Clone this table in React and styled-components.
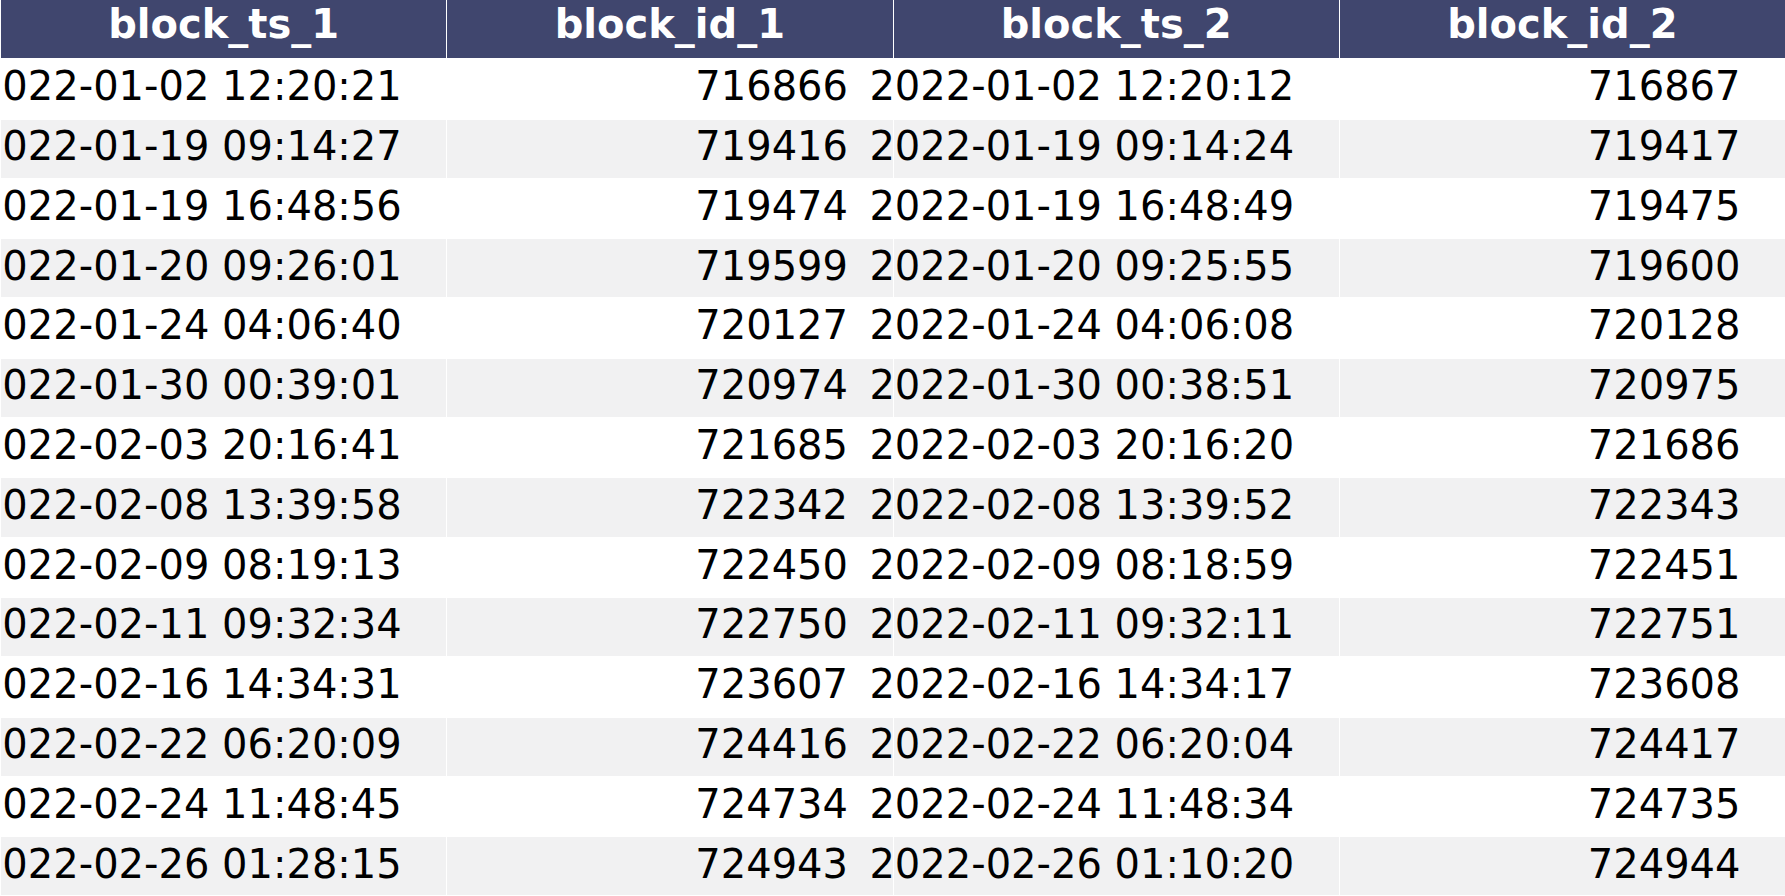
import React from "react";
import styled, { createGlobalStyle } from "styled-components";

const Global = createGlobalStyle`
  html, body {
    margin: 0;
    padding: 0;
    background: #ffffff;
    overflow: hidden;
  }
  body {
    font-family: "DejaVu Sans", "Liberation Sans", sans-serif;
  }
`;

const Table = styled.div`
  width: 1785px;
  height: 896px;
  box-sizing: border-box;
  padding-left: 1px;
  background: #ffffff;
  display: grid;
  grid-template-columns: repeat(4, 1fr);
  grid-template-rows: 58.3px repeat(14, 58.3px);
  column-gap: 1px;
  row-gap: 1.5px;
  overflow: hidden;
`;

const HeaderCell = styled.div`
  background: #40466e;
  color: #ffffff;
  font-weight: bold;
  font-size: 40px;
  line-height: 40px;
  display: flex;
  align-items: center;
  justify-content: center;
  padding-bottom: 10px;
  box-sizing: border-box;
  white-space: nowrap;
`;

const Cell = styled.div`
  background: ${(p) => (p.$striped ? "#f1f1f2" : "#ffffff")};
  color: #000000;
  font-size: 40px;
  line-height: 40px;
  display: flex;
  align-items: center;
  justify-content: flex-end;
  padding-right: 44.5px;
  padding-bottom: 5.6px;
  box-sizing: border-box;
  white-space: nowrap;
  min-width: 0;
  overflow: visible;
`;

const columns = ["block_ts_1", "block_id_1", "block_ts_2", "block_id_2"];

const rows = [
  ["2022-01-02 12:20:21", "716866", "2022-01-02 12:20:12", "716867"],
  ["2022-01-19 09:14:27", "719416", "2022-01-19 09:14:24", "719417"],
  ["2022-01-19 16:48:56", "719474", "2022-01-19 16:48:49", "719475"],
  ["2022-01-20 09:26:01", "719599", "2022-01-20 09:25:55", "719600"],
  ["2022-01-24 04:06:40", "720127", "2022-01-24 04:06:08", "720128"],
  ["2022-01-30 00:39:01", "720974", "2022-01-30 00:38:51", "720975"],
  ["2022-02-03 20:16:41", "721685", "2022-02-03 20:16:20", "721686"],
  ["2022-02-08 13:39:58", "722342", "2022-02-08 13:39:52", "722343"],
  ["2022-02-09 08:19:13", "722450", "2022-02-09 08:18:59", "722451"],
  ["2022-02-11 09:32:34", "722750", "2022-02-11 09:32:11", "722751"],
  ["2022-02-16 14:34:31", "723607", "2022-02-16 14:34:17", "723608"],
  ["2022-02-22 06:20:09", "724416", "2022-02-22 06:20:04", "724417"],
  ["2022-02-24 11:48:45", "724734", "2022-02-24 11:48:34", "724735"],
  ["2022-02-26 01:28:15", "724943", "2022-02-26 01:10:20", "724944"],
];

export default function App() {
  return (
    <>
      <Global />
      <Table>
        {columns.map((c) => (
          <HeaderCell key={c}>{c}</HeaderCell>
        ))}
        {rows.map((r, i) =>
          r.map((v, j) => (
            <Cell key={`${i}-${j}`} $striped={i % 2 === 1}>
              {v}
            </Cell>
          ))
        )}
      </Table>
    </>
  );
}
